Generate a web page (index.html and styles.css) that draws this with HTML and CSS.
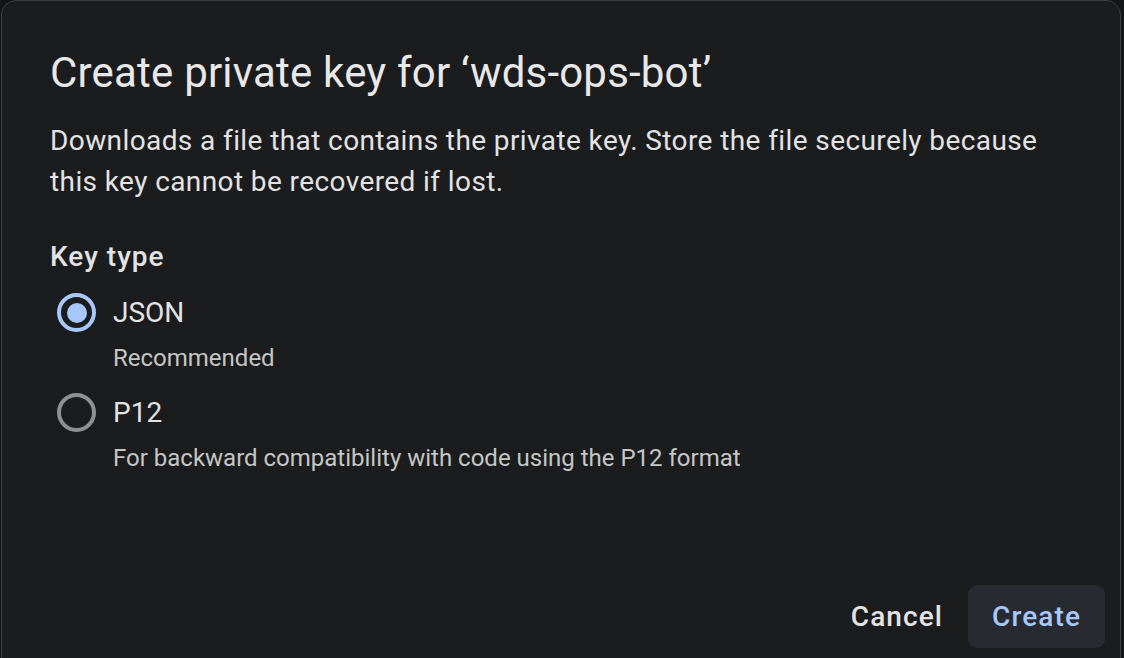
FILE: index.html
```html
<!DOCTYPE html>
<html lang="en">
<head>
<meta charset="utf-8">
<title>Create private key</title>
<link rel="stylesheet" href="styles.css">
</head>
<body>
<div class="page">
  <div class="dialog" role="dialog">
    <h1 class="title">Create private key for ‘wds-ops-bot’</h1>
    <p class="desc">Downloads a file that contains the private key. Store the file securely because this key cannot be recovered if lost.</p>
    <div class="group-label">Key type</div>
    <div class="options">
      <label class="option">
        <span class="radio checked"><span class="dot"></span></span>
        <span class="opt-label">JSON</span>
      </label>
      <div class="hint">Recommended</div>
      <label class="option second">
        <span class="radio"></span>
        <span class="opt-label">P12</span>
      </label>
      <div class="hint">For backward compatibility with code using the P12 format</div>
    </div>
    <div class="actions">
      <button class="btn text">Cancel</button>
      <button class="btn tonal">Create</button>
    </div>
  </div>
</div>
</body>
</html>
```

FILE: styles.css
```css
* { box-sizing: border-box; }
html, body {
  margin: 0;
  padding: 0;
  width: 1124px;
  height: 658px;
  overflow: hidden;
  background: #141517;
  font-family: Roboto, "Liberation Sans", sans-serif;
}
.page {
  display: flex;
  padding-left: 1px;
}
.dialog {
  width: 1120px;
  height: 700px;
  background: #1b1c1e;
  border: 1px solid #3d3e41;
  border-radius: 15px;
  padding: 46px 48px 0 48px;
  display: flex;
  flex-direction: column;
  color: #e3e3e3;
}
.title {
  margin: 0;
  font-size: 42px;
  line-height: 52px;
  font-weight: 400;
  color: #e8e8e8;
  letter-spacing: 0.2px;
}
.desc {
  margin: 21px 0 0 0;
  font-size: 28px;
  line-height: 41px;
  color: #e3e3e3;
  letter-spacing: 0.4px;
  width: 1010px;
}
.group-label {
  margin-top: 34px;
  font-size: 28px;
  line-height: 41px;
  font-weight: 500;
  color: #e3e3e3;
  letter-spacing: 1px;
}
.options {
  margin-top: 15px;
  display: flex;
  flex-direction: column;
}
.option {
  display: flex;
  align-items: center;
  height: 41px;
}
.option.second { margin-top: 18px; }
.radio {
  width: 39px;
  height: 39px;
  margin-left: 7px;
  margin-right: 17px;
  border-radius: 50%;
  border: 4px solid #8e918f;
  display: flex;
  align-items: center;
  justify-content: center;
  flex: none;
}
.radio.checked { border-color: #a8c7fa; }
.dot {
  width: 20px;
  height: 20px;
  border-radius: 50%;
  background: #a8c7fa;
}
.opt-label {
  font-size: 28px;
  line-height: 41px;
  color: #e3e3e3;
}
.hint {
  margin-top: 9px;
  margin-left: 63px;
  font-size: 24px;
  line-height: 32px;
  color: #c4c7c5;
}
.actions {
  margin-top: 111px;
  margin-right: -33px;
  display: flex;
  justify-content: flex-end;
  gap: 1px;
}
.btn {
  height: 63px;
  padding: 0 24px;
  border: none;
  border-radius: 9px;
  font-family: Roboto, "Liberation Sans", sans-serif;
  font-size: 28px;
  font-weight: 500;
  letter-spacing: 1.1px;
  background: transparent;
}
.btn.text { color: #e3e3e3; }
.btn.tonal { background: #282a31; color: #a8c7fa; }
```
